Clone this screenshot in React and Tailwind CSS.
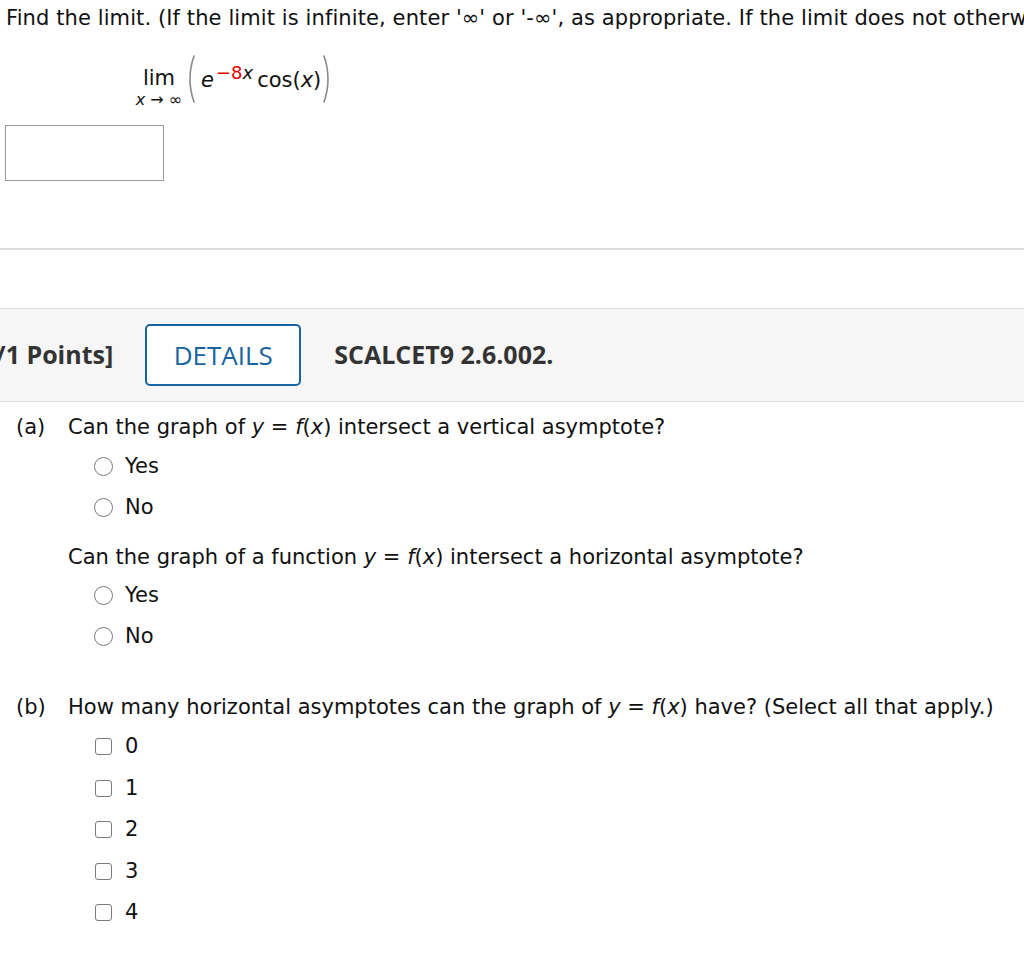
import React from 'react';

const verdana = { fontFamily: '"DejaVu Sans", Verdana, sans-serif' };

function Radio({ label }) {
  return (
    <div className="flex h-[41px] items-center">
      <span className="ml-[94px] h-[19px] w-[19px] rounded-full border-[1.5px] border-[#7b7b7b] bg-white" />
      <span className="ml-[12px]">{label}</span>
    </div>
  );
}

function Check({ label }) {
  return (
    <div className="flex h-[41.5px] items-center">
      <span className="ml-[95px] h-[17px] w-[17px] rounded-[3px] border-[1.5px] border-[#7b7b7b] bg-white" />
      <span className="ml-[13px]">{label}</span>
    </div>
  );
}

function Paren({ right = false }) {
  return (
    <svg width="10" height="50" viewBox="0 0 10 50" className="shrink-0">
      <path
        d={right ? 'M2 2 Q10 25 2 48' : 'M8 2 Q0 25 8 48'}
        fill="none"
        stroke="#8a8a8a"
        strokeWidth="1.6"
        strokeLinecap="round"
      />
    </svg>
  );
}

export default function App() {
  return (
    <div className="relative h-[954px] w-[1024px] overflow-hidden bg-white text-[21px] text-[#111]" style={verdana}>
      <div className="whitespace-nowrap pl-[6px] pt-[6px] leading-[24px] tracking-[0.1px]">
        Find the limit. (If the limit is infinite, enter '∞' or '-∞', as appropriate. If the limit does not otherwise exist, enter DNE.)
      </div>

      {/* limit expression */}
      <div className="mt-[24px] flex h-[50px] items-start whitespace-nowrap">
        <div className="ml-[135px] flex w-[48px] flex-col items-center">
          <span className="mt-[13px] leading-[22px]">lim</span>
          <span className="mt-[4px] text-[16px] leading-[14px]">
            <i>x</i> → ∞
          </span>
        </div>
        <div className="ml-[3px]">
          <Paren />
        </div>
        <i className="ml-[5px] mt-[14px] leading-[24px]">e</i>
        <span className="ml-[2px] mt-[10px] text-[18px] leading-[18px]">
          <span className="text-[#e00000]">−8</span>
          <i>x</i>
        </span>
        <span className="ml-[4px] mt-[14px] leading-[24px]">
          cos(<i>x</i>)
        </span>
        <div className="ml-[1px]">
          <Paren right />
        </div>
      </div>

      <div className="ml-[5px] mt-[21px] h-[56px] w-[159px] border border-[#9a9a9a] bg-white" />

      <div className="mt-[67px] h-[2px] w-full bg-[#dcdcdc]" />

      <div
        className="mt-[58px] flex h-[94px] items-center whitespace-nowrap border-y border-[#e0e0e0] bg-[#f6f6f6] text-[25px] font-bold text-[#333]"
        style={{ fontFamily: '"Open Sans", sans-serif' }}
      >
        <span className="ml-[-21px]">[-/1 Points]</span>
        <span className="ml-[32px] flex h-[62px] w-[156px] items-center justify-center rounded-[5px] border-2 border-[#1764a0] bg-white text-[26px] font-medium text-[#1764a0]">
          DETAILS
        </span>
        <span className="ml-[33px]">SCALCET9 2.6.002.</span>
      </div>

      <div className="mt-[12px] flex h-[28px] items-center whitespace-nowrap">
        <span className="ml-[16px] w-[52px]">(a)</span>
        <span>
          Can the graph of <i>y</i> = <i>f</i>(<i>x</i>) intersect a vertical asymptote?
        </span>
      </div>
      <div className="mt-[4px]">
        <Radio label="Yes" />
        <Radio label="No" />
      </div>

      <div className="mt-[16px] flex h-[28px] items-center whitespace-nowrap pl-[68px]">
        <span>
          Can the graph of a function <i>y</i> = <i>f</i>(<i>x</i>) intersect a horizontal asymptote?
        </span>
      </div>
      <div className="mt-[3px]">
        <Radio label="Yes" />
        <Radio label="No" />
      </div>

      <div className="mt-[37px] flex h-[28px] items-center whitespace-nowrap">
        <span className="ml-[16px] w-[52px]">(b)</span>
        <span>
          How many horizontal asymptotes can the graph of <i>y</i> = <i>f</i>(<i>x</i>) have? (Select all that apply.)
        </span>
      </div>
      <div className="mt-[4px]">
        <Check label="0" />
        <Check label="1" />
        <Check label="2" />
        <Check label="3" />
        <Check label="4" />
      </div>
    </div>
  );
}
